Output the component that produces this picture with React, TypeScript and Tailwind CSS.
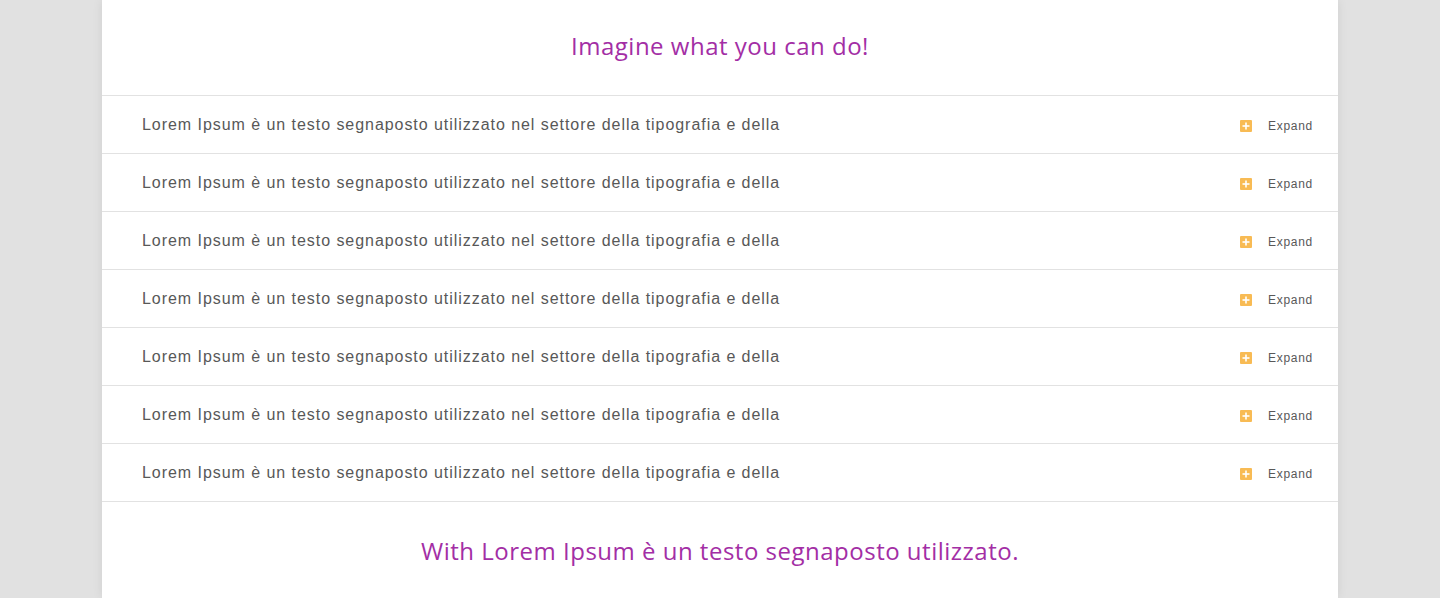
import React from "react";

const rows = Array.from({ length: 7 });

function PlusIcon() {
  return (
    <svg width="12" height="12" viewBox="0 0 12 12" className="shrink-0">
      <rect x="0" y="0" width="12" height="12" rx="1" fill="#f8bb54" />
      <rect x="5.2" y="2.5" width="1.6" height="7" fill="#ffffff" />
      <rect x="2.5" y="5.2" width="7" height="1.6" fill="#ffffff" />
    </svg>
  );
}

export default function App() {
  return (
    <div className="w-full h-[598px] bg-[#e1e1e1] flex justify-center overflow-hidden">
      <div className="w-[1236px] bg-white shadow-[0_0_10px_rgba(0,0,0,0.08)] flex flex-col">
        <div
          className="h-[95px] flex items-center justify-center pb-[3px] text-[24px] tracking-[0.5px] text-[#a32ea5]"
          style={{ fontFamily: '"Open Sans", sans-serif' }}
        >
          Imagine what you can do!
        </div>
        <div className="border-b border-[#e2e2e2]">
          {rows.map((_, i) => (
            <div
              key={i}
              className="h-[58px] border-t border-[#e2e2e2] flex items-center pl-[40px] pr-[25px]"
              style={{ fontFamily: '"Liberation Sans", Arial, sans-serif' }}
            >
              <span className="flex-1 text-[16px] tracking-[0.95px] text-[#585858] pt-[1px]">
                Lorem Ipsum è un testo segnaposto utilizzato nel settore della tipografia e della
              </span>
              <div className="flex items-center gap-[16px] pt-[3px]">
                <PlusIcon />
                <span className="text-[12px] tracking-[0.7px] text-[#585858]">Expand</span>
              </div>
            </div>
          ))}
        </div>
        <div
          className="h-[96px] flex items-start justify-center pt-[31px] text-[24px] tracking-[0.5px] text-[#a32ea5]"
          style={{ fontFamily: '"Open Sans", sans-serif' }}
        >
          With Lorem Ipsum è un testo segnaposto utilizzato.
        </div>
      </div>
    </div>
  );
}
